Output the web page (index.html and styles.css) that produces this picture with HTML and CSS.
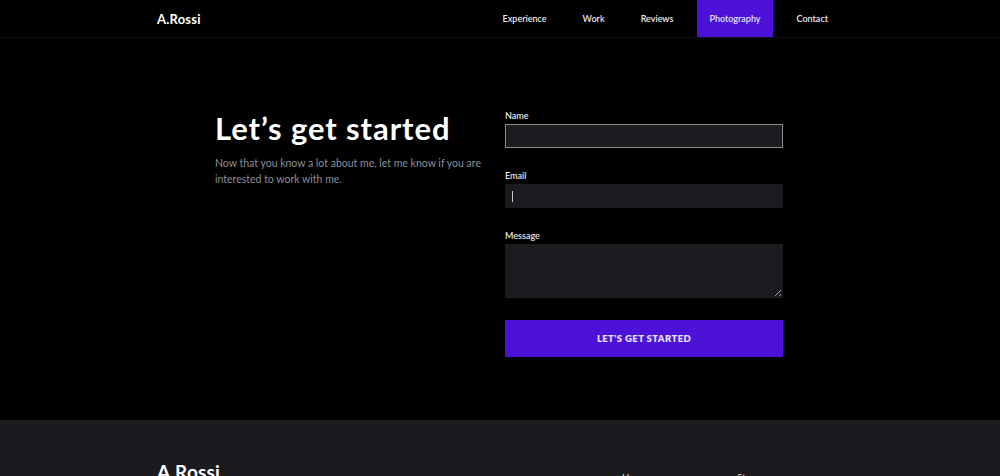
FILE: index.html
```html
<!DOCTYPE html>
<html lang="en">

<head>
    <meta charset="UTF-8">
    <meta name="viewport" content="width=device-width, initial-scale=1.0">
    <title>A.Rossi</title>
    <link rel="stylesheet" href="styles.css">
</head>

<body>
    <header class="header">
        <div class="header-inner">
            <a class="logo" href="#">A.Rossi</a>
            <nav class="nav">
                <a href="#">Experience</a>
                <a href="#">Work</a>
                <a href="#">Reviews</a>
                <a href="#" class="active">Photography</a>
                <a href="#">Contact</a>
            </nav>
        </div>
    </header>

    <section class="contact">
        <div class="contact-inner">
            <div class="intro">
                <h1>Let’s get started</h1>
                <p>Now that you know a lot about me, let me know if you are interested to work with me.</p>
            </div>
            <form class="form">
                <label>Name</label>
                <input type="text" class="field focus">
                <label>Email</label>
                <div class="field caret"></div>
                <label>Message</label>
                <textarea class="field message"></textarea>
                <button type="button">LET'S GET STARTED</button>
            </form>
        </div>
    </section>

    <footer class="footer">
        <div class="footer-inner">
            <a class="logo big" href="#">A.Rossi</a>
            <ul class="links">
                <li><a href="#">Home</a></li>
                <li><a href="#">Store</a></li>
            </ul>
        </div>
    </footer>
</body>

</html>
```

FILE: styles.css
```css
* {
    box-sizing: border-box;
}

html,
body {
    margin: 0;
    height: 100%;
    overflow: hidden;
}

body {
    background: #000;
    color: #fff;
    font-family: Lato, "Noto Sans", sans-serif;
}

a {
    color: inherit;
    text-decoration: none;
}

/* top bar */
.header {
    height: 38px;
    border-bottom: 1px solid #121214;
}

.header-inner {
    width: 686px;
    margin: 0 auto;
    height: 100%;
    display: flex;
    align-items: center;
    justify-content: space-between;
}

.logo {
    font-size: 13px;
    font-weight: 700;
    letter-spacing: .2px;
}

.nav {
    display: flex;
    height: 100%;
    gap: 12px;
    margin-right: 3px;
}

.nav a {
    display: flex;
    align-items: center;
    padding: 0 12px;
    font-size: 9px;
    font-weight: 600;
    color: #e8e8ec;
}

.nav a.active {
    background: #4d12d8;
    color: #e8e0ff;
}

/* contact block */
.contact {
    height: 382px;
}

.contact-inner {
    width: 570px;
    margin: 0 auto;
    padding-top: 68px;
    display: grid;
    grid-template-columns: 270px 278px;
    gap: 20px;
}

.intro h1 {
    margin: 0;
    font-size: 31px;
    line-height: 44px;
    font-weight: 700;
    letter-spacing: .9px;
}

.intro p {
    margin: 5px 0 0;
    font-size: 10.5px;
    line-height: 16px;
    color: #8d8d95;
}

.form {
    display: flex;
    flex-direction: column;
}

.form label {
    font-size: 9px;
    font-weight: 600;
    color: #e4e4e8;
    margin-top: 4px;
    margin-bottom: 3px;
}

.field {
    display: block;
    width: 100%;
    height: 24px;
    background: #1b1b20;
    border: 1px solid #1b1b20;
    margin-bottom: 18px;
    color: #fff;
    font: inherit;
    outline: none;
}

.field.focus {
    border-color: #8a8a90;
}

.caret {
    position: relative;
}

.caret::before {
    content: "";
    position: absolute;
    left: 6px;
    top: 6px;
    width: 1px;
    height: 11px;
    background: #c8c8cc;
}

.message {
    height: 54px;
    resize: vertical;
    margin-bottom: 22px;
}

.form button {
    height: 37px;
    border: none;
    background: #4d12d8;
    color: #e8e0ff;
    font: inherit;
    font-size: 9.5px;
    font-weight: 800;
    letter-spacing: .4px;
    cursor: pointer;
}

/* footer */
.footer {
    background: #1a1a1f;
    height: 120px;
}

.footer-inner {
    width: 686px;
    margin: 0 auto;
    padding-top: 40px;
    display: flex;
    justify-content: space-between;
}

.logo.big {
    font-size: 19px;
}

.links {
    list-style: none;
    margin: 0;
    padding: 5px 0 0;
    display: flex;
    gap: 90px;
    width: 221px;
}

.links a {
    font-size: 9.5px;
    color: #e4e4e8;
}
```
